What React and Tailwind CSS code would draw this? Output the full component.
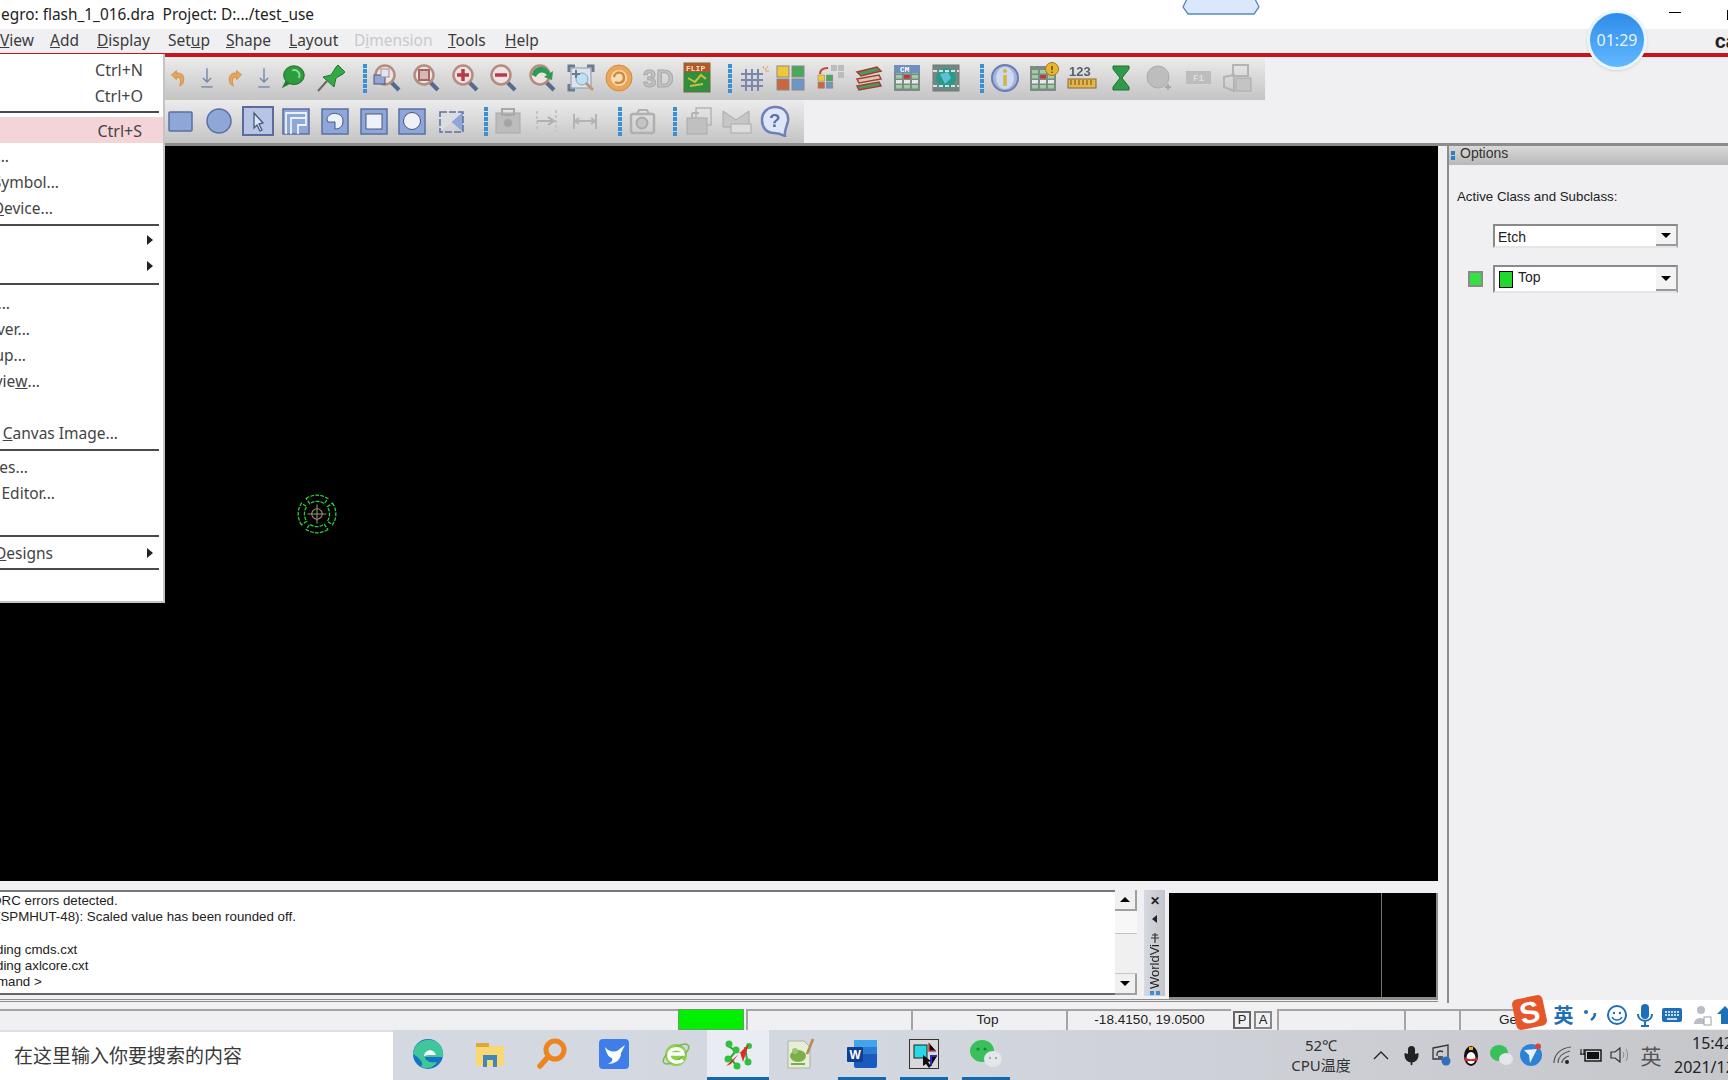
import { Mic } from "lucide-react";

const ui = "font-['Noto_Sans','Noto_Sans_CJK_SC',sans-serif]";
const arial = "font-['Liberation_Sans','Noto_Sans_CJK_SC',sans-serif]";

function Ico({ children, size = 32 }) {
  return (
    <svg width={size} height={size} viewBox="0 0 32 32" fill="none">
      {children}
    </svg>
  );
}

const Undo = ({ flip }) => (
  <Ico size={26}>
    <g transform={flip ? "translate(32 0) scale(-1 1)" : ""}>
      <path d="M8 12 L14 7 L14 10 C22 9 25 15 22 23 L18 26 C20 20 20 15 14 15 L14 18 Z" fill="#e9a45a" stroke="#c98a48" strokeWidth="1" />
    </g>
  </Ico>
);
const DownArrow = () => (
  <Ico size={26}>
    <path d="M16 4 V20 M11 16 L16 21 L21 16" stroke="#7a8aae" strokeWidth="1.8" />
    <path d="M9 27 H23" stroke="#7a8aae" strokeWidth="1.8" />
  </Ico>
);
const Bubble = () => (
  <Ico>
    <ellipse cx="17" cy="13" rx="11" ry="10" fill="#2c9c3c" stroke="#1c6a2a" />
    <path d="M8 19 L4 27 L13 22 Z" fill="#1f7c30" />
    <path d="M15 8 C20 6 25 11 22 16" stroke="#8fdc8f" strokeWidth="2" />
  </Ico>
);
const Pin = () => (
  <Ico>
    <path d="M3 29 L12 19" stroke="#6a6a5a" strokeWidth="2" />
    <path d="M8 15 L16 13 L21 5 L23 3 L30 10 L28 12 L21 16 L19 25 Z" fill="#35a948" stroke="#1e7a30" />
  </Ico>
);
const Mag = ({ children }) => (
  <Ico>
    <path d="M20 20 L28 28" stroke="#566a8e" strokeWidth="4" />
    <circle cx="14" cy="13" r="9.5" fill="#ece4e2" stroke="#b58c80" strokeWidth="2.5" />
    {children}
  </Ico>
);
const Grid = () => (
  <Ico>
    <path d="M4 12 H26 M4 18 H26 M4 24 H26 M9 7 V29 M15 7 V29 M21 7 V29" stroke="#7a88ab" strokeWidth="2" />
    <path d="M26 4 L27 7 M31 4 L28 8 M32 9 L28 9" stroke="#e0a060" strokeWidth="1" />
  </Ico>
);
const Squares = ({ ghost }) => (
  <Ico>
    {ghost && <rect x="17" y="3" width="6" height="6" fill="#bcbcbc" />}
    {ghost && <rect x="24" y="3" width="6" height="6" fill="#bcbcbc" />}
    {ghost && <rect x="24" y="10" width="6" height="6" fill="#bcbcbc" />}
    {ghost && <path d="M6 12 C6 7 10 6 14 6" stroke="#c0453a" strokeWidth="2" />}
    <g transform={ghost ? "translate(4 13) scale(.55)" : "translate(2 4)"}>
      <rect x="0" y="0" width="12" height="11" fill="#f0c93a" stroke="#888" />
      <rect x="15" y="0" width="12" height="11" fill="#48a85c" stroke="#888" />
      <rect x="0" y="13" width="12" height="11" fill="#c9683f" stroke="#888" />
      <rect x="15" y="13" width="12" height="11" fill="#6f94c6" stroke="#888" />
    </g>
  </Ico>
);
const Layers = () => (
  <Ico>
    <path d="M4 10 L24 5 L28 9 L8 14 Z" fill="#4b9a58" stroke="#a33c38" strokeWidth="1.5" />
    <path d="M4 17 L26 13 L28 17 L6 21 Z" fill="#d8cbb0" stroke="#a33c38" strokeWidth="1.5" />
    <path d="M4 24 L26 20 L28 24 L6 28 Z" fill="#4b9a58" stroke="#a33c38" strokeWidth="1.5" />
  </Ico>
);
const Cells = ({ children }) => (
  <Ico>
    <rect x="3" y="4" width="26" height="25" fill="#7f8a86" />
    {[8, 13, 18, 23].map((y) =>
      [5, 13, 21].map((x) => (
        <rect key={x + "-" + y} x={x} y={y} width="6" height="3.5" fill={y === 13 && x === 13 ? "#c03a34" : y === 18 ? "#e8e8e8" : "#9cd0a0"} />
      ))
    )}
    {children}
  </Ico>
);
const Swatch = () => (
  <Ico>
    <rect x="3" y="3" width="26" height="26" fill="#6f8a84" stroke="#777" />
    <circle cx="16" cy="16" r="10" fill="#2a9a86" />
    <path d="M10 12 L18 10 L21 16 L15 22 Z" fill="#5ec0d8" />
    <path d="M3 9 H29 M3 24 H29" stroke="#ddd" strokeWidth="2" strokeDasharray="4 2" />
  </Ico>
);
const Blue = ({ children, raised }) => (
  <Ico>
    {raised && <rect x="1" y="2" width="30" height="28" fill="#b7c4e4" stroke="#5a6c9c" strokeWidth="2" />}
    {children}
  </Ico>
);
const boxFill = "#8fa6d9";
const boxLine = "#5a709f";

function Slot({ children, className = "w-[38.7px]" }) {
  return <div className={"h-full shrink-0 flex items-center justify-center blur-[0.4px] " + className}>{children}</div>;
}

function Grip() {
  return (
    <div className="w-[6px] shrink-0 flex flex-col items-center justify-center gap-[1px]">
      {[0, 1, 2, 3, 4, 5].map((i) => (
        <div key={i} className="w-[4px] h-[4px] bg-[#3a8fd6]" />
      ))}
    </div>
  );
}

function Group({ grip, className, items, widths }) {
  return (
    <div className={"flex h-full bg-gradient-to-b from-[#ececec] to-[#c4c4c4] " + className}>
      {grip && <Grip />}
      {items.map((it, i) => (
        <Slot key={i} className={(widths ? widths[i] : "w-[38.7px]") + " pb-[2px]"}>{it}</Slot>
      ))}
    </div>
  );
}

const row1a = [<Undo />, <DownArrow />, <Undo flip />, <DownArrow />, <Bubble />, <Pin />];
const row1aWidths = ["w-[28.5px]", "w-[28.5px]", "w-[28.5px]", "w-[28.5px]", "w-[30px]", "w-[46px]"];
const row1b = [
  <Mag><rect x="3" y="13" width="11" height="9" fill="#8fa6d9" stroke="#556" /><rect x="10" y="7" width="8" height="8" fill="#dfe6f5" stroke="#a88" /></Mag>,
  <Mag><rect x="9" y="8" width="10" height="10" fill="#d8b8b4" stroke="#a06a62" strokeWidth="2" /></Mag>,
  <Mag><path d="M14 7 V19 M8 13 H20" stroke="#b83a4a" strokeWidth="3.5" /></Mag>,
  <Mag><path d="M8 13 H20" stroke="#b83a4a" strokeWidth="3.5" /></Mag>,
  <Mag><path d="M6 13 C7 3 20 2 24 11 L27 9 L26 18 L18 15 L21 13 C17 9 12 10 10 15 Z" fill="#2f9a54" /></Mag>,
  <Ico>
    <path d="M4 10 V4 H10 M22 4 H28 V10 M4 22 V28 H10" stroke="#6a7c90" strokeWidth="3" />
    <rect x="6" y="6" width="20" height="20" fill="#dce3ec" stroke="#8a98aa" />
    <circle cx="17" cy="17" r="6" fill="#bfe0f4" stroke="#8aa" />
    <path d="M21 21 L28 28" stroke="#c09878" strokeWidth="3" />
    <path d="M11 8 V16 M7 12 H15" stroke="#6a7c90" strokeWidth="2" />
  </Ico>,
  <Ico>
    <circle cx="16" cy="16" r="13" fill="#eaa558" stroke="#d08a3e" />
    <circle cx="16" cy="16" r="8" fill="#f6dcb4" />
    <path d="M11 15 C12 9 21 9 21 16 C21 21 15 22 12 20" stroke="#d08a3e" strokeWidth="2.5" />
  </Ico>,
  <Ico>
    <text x="1" y="25" fontFamily="Liberation Sans" fontWeight="700" fontSize="24" fill="#c2c2c2" stroke="#a8a8a8">3D</text>
  </Ico>,
  <Ico>
    <rect x="3" y="1" width="26" height="29" fill="#2f8f3c" stroke="#6b6b3a" />
    <rect x="3" y="1" width="26" height="9" fill="#b35a2c" />
    <text x="5" y="9" fontFamily="Liberation Mono" fontWeight="700" fontSize="8" fill="#f3e2b8">FLIP</text>
    <path d="M7 16 L14 20 L20 13 L25 17 M9 24 L22 22" stroke="#c9c23a" strokeWidth="2" />
  </Ico>,
];
const row1c = [
  <Grid />,
  <Squares />,
  <Squares ghost />,
  <Layers />,
  <Cells>
    <rect x="3" y="3" width="26" height="8" fill="#6f8fc0" />
    <text x="9" y="10" fontFamily="Liberation Mono" fontWeight="700" fontSize="8" fill="#fff">CM</text>
  </Cells>,
  <Swatch />,
];
const row1d = [
  <Ico>
    <circle cx="16" cy="16" r="13" fill="#a4b4de" stroke="#6d7fb0" strokeWidth="2" />
    <ellipse cx="16" cy="16" rx="9" ry="11" fill="#cfd9f0" />
    <path d="M16 13 V24" stroke="#d2b53a" strokeWidth="3.5" />
    <circle cx="16" cy="9" r="2" fill="#d2b53a" />
  </Ico>,
  <Cells>
    <circle cx="25" cy="7" r="6.5" fill="#e9b52e" stroke="#9a7a20" />
    <path d="M25 4 V8 M25 9.5 V11" stroke="#6a4a10" strokeWidth="1.5" />
  </Cells>,
  <Ico>
    <text x="3" y="14" fontFamily="Liberation Sans" fontWeight="700" fontSize="13" fill="#58616e">123</text>
    <rect x="2" y="17" width="28" height="9" fill="#e6b64a" stroke="#8a6a30" />
    <path d="M5 18 V23 M9 18 V23 M13 18 V23 M17 18 V23 M21 18 V23 M25 18 V23" stroke="#6a5020" />
  </Ico>,
  <Ico>
    <path d="M8 4 H24 V7 L17 16 L24 25 V28 H8 V25 L15 16 L8 7 Z" fill="#2f9a4a" stroke="#1f7034" />
  </Ico>,
  <Ico>
    <circle cx="15" cy="15" r="11" fill="#bdbdbd" stroke="#aaa" />
    <path d="M25 22 V28 M22 25 H28" stroke="#a8a8a8" strokeWidth="2" />
  </Ico>,
  <Ico>
    <rect x="4" y="9" width="25" height="13" fill="#bdbdbd" />
    <text x="11" y="19" fontFamily="Liberation Mono" fontWeight="700" fontSize="9" fill="#dedede">F1</text>
  </Ico>,
  <Ico>
    <rect x="12" y="3" width="15" height="11" stroke="#b4b4b4" strokeWidth="2" />
    <rect x="15" y="16" width="15" height="13" fill="#c4c4c4" stroke="#aaa" />
    <path d="M3 15 L13 13 V29 L3 25 Z" stroke="#b4b4b4" strokeWidth="2" />
  </Ico>,
];
const row2a = [
  <Blue><rect x="5" y="7" width="23" height="19" rx="1" fill={boxFill} stroke={boxLine} strokeWidth="1.5" /></Blue>,
  <Blue><circle cx="16" cy="16" r="12" fill={boxFill} stroke={boxLine} strokeWidth="1.5" /></Blue>,
  <Blue raised><path d="M12 8 L12 23 L15 20 L18 26 L20 25 L17 19 L21 18 Z" fill="#dfe6f5" stroke="#46587e" strokeWidth="1.3" /></Blue>,
  <Blue><rect x="3" y="4" width="26" height="25" fill={boxFill} stroke={boxLine} strokeWidth="1.5" /><path d="M6 29 V8 H26 V20 H18 V29 M11 29 V13 H26" stroke="#eef1f8" strokeWidth="1.8" /></Blue>,
  <Blue><rect x="3" y="4" width="26" height="25" fill={boxFill} stroke={boxLine} strokeWidth="1.5" /><path d="M8 15 C8 6 24 6 24 16 C24 22 20 24 16 24 V17 H9 Z" fill="#eef1f8" stroke="#46587e" /></Blue>,
  <Blue><rect x="3" y="4" width="26" height="25" fill={boxFill} stroke={boxLine} strokeWidth="1.5" /><rect x="8" y="9" width="16" height="15" fill="#eef1f8" stroke="#46587e" /></Blue>,
  <Blue><rect x="3" y="4" width="26" height="25" fill={boxFill} stroke={boxLine} strokeWidth="1.5" /><circle cx="16" cy="16" r="8.5" fill="#eef1f8" stroke="#46587e" /></Blue>,
  <Blue><path d="M5 7 H28 V27 Z" fill={boxFill} /><path d="M5 27 L28 7 L5 7 Z" fill="#dcdde2" /><path d="M5 7 H28 V27 H5 Z" stroke={boxLine} strokeWidth="1.5" strokeDasharray="7 2" /></Blue>,
];
const Case = () => (
  <Ico>
    <rect x="4" y="8" width="24" height="20" fill="#bcbcbc" stroke="#a8a8a8" />
    <rect x="10" y="4" width="12" height="6" stroke="#a8a8a8" strokeWidth="2" />
    <circle cx="16" cy="18" r="4" fill="#a4a4a4" />
  </Ico>
);
const row2b = [
  <Case />,
  <Ico>
    <path d="M6 6 V26 M25 5 V27" stroke="#c4c4c4" strokeWidth="2" strokeDasharray="3 2" />
    <path d="M6 16 H22 M17 12 L23 16 L17 20" stroke="#b0b0b0" strokeWidth="2" />
  </Ico>,
  <Ico>
    <path d="M5 9 V24 M27 9 V24 M6 16 H26 M10 13 L6 16 L10 19 M22 13 L26 16 L22 19" stroke="#b4b4b4" strokeWidth="2" />
  </Ico>,
];
const row2c = [
  <Ico>
    <rect x="5" y="9" width="23" height="19" rx="2" stroke="#b0b0b0" strokeWidth="2.5" />
    <path d="M11 9 L13 5 H21 L23 9" stroke="#b0b0b0" strokeWidth="2" />
    <circle cx="16" cy="18" r="5.5" fill="#c4c4c4" stroke="#aaa" strokeWidth="2" />
  </Ico>,
];
const row2d = [
  <Ico>
    <rect x="14" y="3" width="15" height="17" stroke="#b4b4b4" strokeWidth="1.5" />
    <rect x="5" y="13" width="20" height="16" fill="#c0c0c0" stroke="#aaa" />
    <path d="M10 8 H17 M10 8 V13" stroke="#b4b4b4" strokeWidth="2" />
  </Ico>,
  <Ico>
    <path d="M3 6 L16 15 L29 6 V22 H3 Z" fill="#c6c6c6" stroke="#aaa" />
    <rect x="11" y="19" width="20" height="9" fill="#dcdcdc" stroke="#aaa" />
  </Ico>,
  <Ico>
    <path d="M16 2 C25 2 30 8 29 16 C28 22 25 25 26 31 C22 29 19 28 15 28 C7 28 3 22 3 15 C3 7 9 2 16 2 Z" fill="#dfe6f5" stroke="#6e82b8" strokeWidth="2.5" />
    <text x="10" y="22" fontFamily="Liberation Sans" fontWeight="700" fontSize="19" fill="#5c71a8">?</text>
  </Ico>,
];

function MenuBar() {
  const items = [
    [<><u>V</u>iew</>, "w-[50px]"],
    [<><u>A</u>dd</>, "w-[47px]"],
    [<><u>D</u>isplay</>, "w-[71px]"],
    [<>Set<u>u</u>p</>, "w-[58px]"],
    [<><u>S</u>hape</>, "w-[63px]"],
    [<><u>L</u>ayout</>, "w-[65px]"],
    [<>D<u>i</u>mension</>, "w-[94px] text-[#c9c9cb]"],
    [<><u>T</u>ools</>, "w-[57px]"],
    [<><u>H</u>elp</>, "w-[50px]"],
  ];
  return (
    <div className={"h-[24px] flex items-center text-[15.5px] text-[#3c3c3c] whitespace-nowrap " + ui}>
      {items.map(([label, cls], i) => (
        <span key={i} className={cls}>{label}</span>
      ))}
      <span className={"ml-auto mr-[-9px] text-[20px] font-bold text-[#222] " + arial}>ca</span>
    </div>
  );
}

function MenuRow({ end = "w-[8px]", label, right, arrow, hi }) {
  return (
    <div className={"h-[26px] pt-[2px] flex items-center shrink-0 relative whitespace-nowrap " + (hi ? "bg-[#f4d4d6] mr-[-3px]" : "")}>
      {label && <div className={"flex justify-end " + end}>{label}</div>}
      {right && <span className={"absolute text-[16px] " + (hi ? "right-[24px]" : "right-[20px]")}>{right}</span>}
      {arrow && <span className="absolute left-[147px] mb-[2px] w-0 h-0 border-y-[5px] border-y-transparent border-l-[6px] border-l-[#222]" />}
    </div>
  );
}

function FileMenu() {
  const Sep = ({ className }) => <div className={"h-[2px] w-[159px] bg-[#4a4a4a] shrink-0 " + className} />;
  return (
    <div className={"absolute left-0 top-[54px] w-[165px] h-[549px] bg-white border-r-2 border-b-2 border-[#c4c4c4] flex flex-col pt-[2px] overflow-hidden text-[15.5px] text-[#444] z-10 " + ui}>
      <MenuRow right="Ctrl+N" />
      <MenuRow right="Ctrl+O" />
      <Sep className="mt-[3px] mb-[4px]" />
      <MenuRow hi right="Ctrl+S" />
      <MenuRow label="..." end="w-[9px]" />
      <MenuRow label="Symbol..." end="w-[59px]" />
      <MenuRow label={<><u>D</u>evice...</>} end="w-[53px]" />
      <Sep className="mt-[3px] mb-[1px]" />
      <MenuRow arrow />
      <MenuRow arrow />
      <Sep className="mt-[4px] mb-[5px]" />
      <MenuRow label="..." end="w-[10px]" />
      <MenuRow label="ver..." end="w-[30px]" />
      <MenuRow label="up..." end="w-[26px]" />
      <MenuRow label={<>vie<u>w</u>...</>} end="w-[40px]" />
      <MenuRow />
      <MenuRow label={<><u>C</u>anvas Image...</>} end="w-[118px]" />
      <Sep className="mt-[3px] mb-[3px]" />
      <MenuRow label="es..." end="w-[28px]" />
      <MenuRow label="Editor..." end="w-[55px]" />
      <MenuRow />
      <Sep className="mt-[3px] mb-[3px]" />
      <MenuRow arrow label={<><u>D</u>esigns</>} end="w-[53px]" />
      <Sep className="mt-[2px]" />
    </div>
  );
}

function Toolbars() {
  return (
    <div className="h-[89px] shrink-0 flex flex-col border-b-[3px] border-b-[#8c8c8c]">
      <div className="h-[43px] flex pl-[164px]">
        <Group className="pr-[8px]" items={row1a} widths={row1aWidths} />
        <Group grip className="pr-[11px]" items={row1b} />
        <Group grip className="pr-[14px]" items={row1c} />
        <Group grip className="pr-[9px]" items={row1d} />
      </div>
      <div className="h-[43px] flex pl-[161px]">
        <Group className="pr-[12px]" items={row2a} />
        <Group grip className="pr-[12px]" items={row2b} />
        <Group grip className="pr-[11px]" items={row2c} />
        <Group grip className="pr-[10px]" items={row2d} />
      </div>
    </div>
  );
}

function ScrollBtn({ up }) {
  return (
    <div className="h-[21px] bg-[#f0f0f0] border-r-2 border-b-2 border-[#a0a0a0] flex items-center justify-center shrink-0">
      <span className={"w-0 h-0 border-x-[5px] border-x-transparent " + (up ? "border-b-[5px] border-b-black" : "border-t-[5px] border-t-black")} />
    </div>
  );
}

function Dock() {
  return (
    <div className="h-[108px] flex mt-[9px]">
      <div className={"w-[1117px] h-[105px] bg-white border-y-2 border-t-[#777] border-b-[#666] text-[13.3px] leading-[16.3px] text-[#222] pt-[1px] overflow-hidden " + arial}>
        <div className="ml-[-8px]">DRC errors detected.</div>
        <div className="ml-[-4px]">(SPMHUT-48): Scaled value has been rounded off.</div>
        <div className="h-[16.3px]" />
        <div className="ml-[-4px]">ding cmds.cxt</div>
        <div className="ml-[-4px]">ding axlcore.cxt</div>
        <div className="ml-[-3px]">mand &gt;</div>
      </div>
      <div className="w-[22px] h-[105px] flex flex-col">
        <ScrollBtn up />
        <div className="h-[22px] bg-[#f7f7f7]" />
        <div className="flex-1 bg-[#f0f0f0] border-y border-[#c4c4c4]" />
        <ScrollBtn />
      </div>
      <div className="w-[21px] ml-[7px] h-[106px] bg-gradient-to-r from-[#d6d9e0] to-[#c2c4ca] flex flex-col items-center pt-[4px] overflow-hidden">
        <span className={"text-[12px] leading-[14px] font-bold text-[#222] " + arial}>✕</span>
        <span className="mt-[7px] w-0 h-0 border-y-[4px] border-y-transparent border-r-[5px] border-r-[#222]" />
        <svg className="mt-[9px]" width="12" height="12" viewBox="0 0 12 12"><path d="M2 6 H10 M6 1 V11 M3 3 H9" stroke="#333" strokeWidth="1.2" /></svg>
        <span className={"[writing-mode:vertical-rl] rotate-180 text-[13px] leading-[15px] text-[#222] " + arial}>WorldVi</span>
        <div className="mt-[2px] flex gap-[2px]">
          <span className="w-[4px] h-[4px] bg-[#3a8fd6]" />
          <span className="w-[4px] h-[4px] bg-[#3a8fd6]" />
        </div>
      </div>
      <div className="w-[269px] ml-[4px] mt-[3px] h-[106px] bg-black border-r-2 border-b-2 border-[#8c8c8c] flex">
        <div className="w-[213px] border-r border-[#6a7a60]" />
      </div>
    </div>
  );
}

function Crosshair() {
  const bow = "M9.7 5.3 A18 18 0 0 1 30.3 5.3 L26.9 10.2 A12 12 0 0 0 13.1 10.2 Z";
  return (
    <div className="absolute left-[296px] top-[347px]">
      <svg width="42" height="42" viewBox="0 0 40 40" fill="none">
        <g stroke="#2cd03e" strokeWidth="1.2" strokeDasharray="3.5 1.2">
          {[0, 90, 180, 270].map((a) => (
            <path key={a} d={bow} transform={"rotate(" + a + " 20 20)"} />
          ))}
        </g>
        <circle cx="20" cy="20" r="5" stroke="#9a9a70" />
        <path d="M20 11 V29 M11 20 H29" stroke="#9a9a70" />
      </svg>
    </div>
  );
}

function SelectBox({ className, children }) {
  return (
    <div className={"w-[185px] bg-white border-2 border-[#8a8a8a] border-r-[#a0a0a0] border-b-[#e6e6e6] flex items-center text-[14px] text-[#222] " + className}>
      <div className="flex-1 flex items-center">{children}</div>
      <div className="w-[20px] h-full bg-[#f3f3f3] border-b-2 border-[#999] flex items-center justify-center">
        <span className="w-0 h-0 border-x-[5px] border-x-transparent border-t-[5px] border-t-black" />
      </div>
    </div>
  );
}

function OptionsPanel() {
  return (
    <div className={"w-[281px] ml-[9px] h-[857px] border-l-2 border-[#8c8c8c] " + arial}>
      <div className="h-[19px] bg-gradient-to-b from-[#d9d9d9] to-[#b8b8b8] flex items-center pl-[2px] pb-[5px]">
        <div className="flex flex-col gap-[1px] mr-[5px] mt-[4px]">
          <span className="w-[4px] h-[4px] bg-[#2f7fc8]" />
          <span className="w-[4px] h-[4px] bg-[#2f7fc8]" />
        </div>
        <span className="text-[14px] text-[#333]">Options</span>
      </div>
      <div className="pl-[8px] pt-[23px] text-[13.3px] leading-[18px] text-[#222]">Active Class and Subclass:</div>
      <div className="pl-[44px] mt-[18px]">
        <SelectBox className="h-[24px]"><span className="pl-[3px] pt-[3px]">Etch</span></SelectBox>
      </div>
      <div className="flex items-center mt-[17px] pl-[19px]">
        <div className="w-[15px] h-[16px] bg-[#33e23f] border-2 border-[#8a8a8a] mr-[10px]" />
        <SelectBox className="h-[28px]">
          <span className="w-[14px] h-[17px] ml-[4px] bg-[#1fd92f] border border-black" />
          <span className="pl-[5px] -mt-[4px]">Top</span>
        </SelectBox>
      </div>
    </div>
  );
}

function StatusBar() {
  const cell = "h-full border-l-2 border-t-2 border-[#a4a4a4] flex items-center justify-center shrink-0";
  return (
    <div className={"h-[21px] shrink-0 flex text-[13.6px] text-[#222] bg-[#f0eff1] " + arial}>
      <div className="w-[678px] shrink-0 border-t-2 border-[#a4a4a4]" />
      <div className="w-[66px] shrink-0 bg-[#00f000] border border-[#6a9a6a]" />
      <div className="w-[2px] shrink-0" />
      <div className={cell + " w-[165px]"} />
      <div className={cell + " w-[155px] pr-[4px]"}>Top</div>
      <div className={cell + " w-[165px]"}>-18.4150, 19.0500</div>
      <div className="w-[18px] ml-[2px] mt-[2px] h-[18px] border-2 border-[#666] flex items-center justify-center shrink-0 text-[13px]">P</div>
      <div className="w-[18px] ml-[3px] mt-[2px] h-[18px] border-2 border-[#888] flex items-center justify-center shrink-0 text-[13px]">A</div>
      <div className={cell + " w-[127px] ml-[5px]"} />
      <div className={cell + " w-[55px]"} />
      <div className={cell + " flex-1 justify-start pl-[38px]"}>Ge</div>
    </div>
  );
}

function ImeBar() {
  return (
    <div className="absolute left-[1512px] top-[995px] w-[216px] h-[35px] z-10 flex">
      <div className="absolute left-[20px] right-0 top-[5px] h-[29px] bg-white" />
      <div className="relative shrink-0 w-[35px] h-[35px] flex items-center justify-center">
        <div className="w-[31px] h-[31px] bg-[#e5562a] rounded-[5px] -rotate-12 flex items-center justify-center">
          <span className={"text-[30px] leading-none font-black text-white " + arial}>S</span>
        </div>
      </div>
      <div className="relative shrink-0 flex items-center pt-[5px] text-[#1f6fb8]">
        <span className={"w-[27px] ml-[3px] text-center text-[20px] font-bold font-['Noto_Sans_CJK_SC',sans-serif]"}>英</span>
        <svg className="ml-[3px]" width="22" height="22" viewBox="0 0 22 22" fill="none"><circle cx="6" cy="8" r="2" fill="#1f6fb8" /><path d="M15 9 C15 12 14 14 11 16" stroke="#1f6fb8" strokeWidth="2.5" /></svg>
        <svg className="ml-[4px]" width="22" height="22" viewBox="0 0 22 22" fill="none"><circle cx="11" cy="11" r="9" stroke="#1f6fb8" strokeWidth="2" /><circle cx="8" cy="9" r="1.2" fill="#1f6fb8" /><circle cx="14" cy="9" r="1.2" fill="#1f6fb8" /><path d="M6 13 C8 17 14 17 16 13" stroke="#1f6fb8" strokeWidth="1.5" /></svg>
        <svg className="ml-[7px]" width="20" height="24" viewBox="0 0 20 24" fill="none"><rect x="6" y="1" width="8" height="15" rx="4" fill="#1f6fb8" /><path d="M3 11 C3 20 17 20 17 11 M10 18 V23 M6 23 H14" stroke="#1f6fb8" strokeWidth="2" /></svg>
        <svg className="ml-[6px]" width="22" height="18" viewBox="0 0 22 18" fill="none"><rect x="1" y="2" width="20" height="14" rx="2" fill="#1f6fb8" /><path d="M4 6 H18 M4 9 H18" stroke="#fff" strokeWidth="1.5" strokeDasharray="2 1" /><path d="M6 13 H16" stroke="#fff" strokeWidth="1.5" /></svg>
        <svg className="ml-[8px]" width="22" height="22" viewBox="0 0 22 22" fill="none"><circle cx="10" cy="6" r="4" fill="#b9bec6" /><path d="M3 20 C3 12 15 12 15 20 Z" fill="#b9bec6" /><rect x="13" y="13" width="7" height="8" fill="#fff" stroke="#9aa0a8" /></svg>
        <svg className="ml-[3px]" width="18" height="22" viewBox="0 0 18 22" fill="none"><path d="M9 2 L17 10 H13 V20 H5 V10 H1 Z" fill="#1f6fb8" /></svg>
      </div>
    </div>
  );
}

function TaskIcon({ children, active, bar }) {
  return (
    <div className={"w-[62px] shrink-0 h-full flex flex-col " + (active ? "bg-[#e9edf3]" : "")}>
      <div className="flex-1 flex items-center justify-center">{children}</div>
      <div className={"h-[3px] shrink-0 " + (bar === "full" ? "bg-[#1269b0]" : bar ? "mx-[7px] bg-[#1269b0]" : "")} />
    </div>
  );
}

function Taskbar() {
  return (
    <div className="h-[50px] shrink-0 flex bg-gradient-to-r from-[#d5d9e3] via-[#d3d7df] to-[#c6c7cb] overflow-visible">
      <div className={"w-[393px] shrink-0 bg-white border-t-2 border-[#dde0e6] flex items-center pl-[14px] pb-[2px] text-[19px] text-[#3a3a3a] font-['Noto_Sans_CJK_SC',sans-serif]"}>在这里输入你要搜索的内容</div>
      <div className="flex pl-[4px]">
        <TaskIcon>
          <svg width="32" height="32" viewBox="0 0 32 32"><circle cx="16" cy="16" r="15" fill="#1672c4" /><path d="M1 16 C2 4 14 -1 23 3 C30 7 32 14 31 19 H13 C13 23 18 25 25 24 C22 30 14 32 8 28 C13 28 9 20 1 16 Z" fill="#3fc79a" /><path d="M12 18 C13 11 22 10 24 17 H16 Z" fill="#fff" /></svg>
        </TaskIcon>
        <TaskIcon>
          <svg width="30" height="28" viewBox="0 0 30 28"><path d="M1 3 H12 L15 6 H29 V26 H1 Z" fill="#f8d775" /><rect x="1" y="3" width="13" height="4" fill="#d9a93c" /><path d="M8 27 V15 H22 V27 H18 V20 H12 V27 Z" fill="#3f87b8" /></svg>
        </TaskIcon>
        <TaskIcon>
          <svg width="30" height="32" viewBox="0 0 30 32" fill="none"><circle cx="18" cy="12" r="9" stroke="#ee8420" strokeWidth="5" /><path d="M11 19 L3 28" stroke="#ee8420" strokeWidth="5.5" strokeLinecap="round" /></svg>
        </TaskIcon>
        <TaskIcon>
          <svg width="30" height="30" viewBox="0 0 30 30"><rect width="30" height="30" rx="4" fill="#3f7ee8" /><path d="M6 8 C10 13 14 13 18 12 L26 6 L22 14 C22 21 16 25 9 25 C13 23 14 21 13 19 C9 18 7 13 6 8 Z" fill="#fff" /></svg>
        </TaskIcon>
        <TaskIcon>
          <svg width="30" height="30" viewBox="0 0 30 30" fill="none"><circle cx="15" cy="16" r="11" fill="#8fd14a" /><ellipse cx="15" cy="15" rx="15" ry="6" stroke="#7aba54" strokeWidth="1.5" transform="rotate(-35 15 15)" /><path d="M8 15 H22 C22 8 9 8 8 15 C7 23 17 25 22 21" stroke="#fff" strokeWidth="3.5" /></svg>
        </TaskIcon>
        <TaskIcon active bar="full">
          <svg width="30" height="32" viewBox="0 0 30 32" fill="none"><path d="M5 8 L13 13 L7 20 L14 28 M22 9 L24 22" stroke="#29a83a" strokeWidth="2" /><g fill="#2fc23f"><circle cx="6" cy="6" r="3.5" /><circle cx="13" cy="12" r="3.5" /><circle cx="5" cy="21" r="3.5" /><circle cx="14" cy="28" r="3.5" /><circle cx="25" cy="24" r="3.5" /><circle cx="26" cy="8" r="3" /></g><path d="M3 28 L26 6 L20 24 L17 14 L8 26 Z" fill="#e02a24" /></svg>
        </TaskIcon>
        <TaskIcon>
          <svg width="30" height="32" viewBox="0 0 30 32"><path d="M3 3 H19 L25 9 V30 H3 Z" fill="#e6edd8" stroke="#aab5a0" /><ellipse cx="13" cy="18" rx="8" ry="6" fill="#7dae4a" /><circle cx="10" cy="13" r="3" fill="#9cc870" /><path d="M6 26 H20" stroke="#7dae4a" strokeWidth="2" /><path d="M22 16 L28 1" stroke="#b8894a" strokeWidth="2.5" /></svg>
        </TaskIcon>
        <TaskIcon bar="part">
          <svg width="30" height="30" viewBox="0 0 30 30"><rect x="7" y="1" width="23" height="28" rx="2" fill="#185abd" /><rect x="7" y="1" width="23" height="7" fill="#41a5ee" /><rect x="7" y="8" width="23" height="7" fill="#2b7cd3" /><rect x="0" y="8" width="16" height="15" rx="1" fill="#103f91" /><text x="2.5" y="20" fontFamily="Liberation Sans" fontWeight="700" fontSize="12" fill="#fff">W</text></svg>
        </TaskIcon>
        <TaskIcon bar="part">
          <svg width="30" height="30" viewBox="0 0 30 30"><rect width="30" height="30" fill="#d8d8da" stroke="#333" strokeWidth="2" /><rect x="5" y="6" width="13" height="13" fill="#28d8e4" stroke="#222" /><path d="M20 4 V12 H27" stroke="#c04048" strokeWidth="1.5" /><path d="M22 27 V17 H28" stroke="#2a2ab8" strokeWidth="2" /><path d="M14 16 L14 27 L17 25 L20 29 L22 27 L19 23 L22 22 Z" fill="#111" /></svg>
        </TaskIcon>
        <TaskIcon bar="part">
          <svg width="32" height="28" viewBox="0 0 32 28"><ellipse cx="12" cy="11" rx="12" ry="11" fill="#39c05a" /><circle cx="8" cy="9" r="1.6" fill="#178a38" /><circle cx="15" cy="9" r="1.6" fill="#178a38" /><ellipse cx="23" cy="19" rx="9" ry="8" fill="#e4e6ea" /><circle cx="20" cy="18" r="1.2" fill="#aaa" /><circle cx="26" cy="18" r="1.2" fill="#aaa" /></svg>
        </TaskIcon>
      </div>
      <div className="flex-1" />
      <div className={"w-[80px] mr-[5px] shrink-0 flex flex-col items-center justify-center text-[15px] leading-[20px] text-[#333] " + ui}>
        <span>52℃</span>
        <span>CPU温度</span>
      </div>
      <div className="flex shrink-0">
        {[
          <svg width="18" height="12" viewBox="0 0 18 12" fill="none"><path d="M2 10 L9 3 L16 10" stroke="#222" strokeWidth="1.3" /></svg>,
          <Mic size={21} className="text-[#222] fill-[#222]" />,
          <svg width="22" height="22" viewBox="0 0 22 22" fill="none"><path d="M3 4 L18 1 V15 H3 Z" stroke="#333" strokeWidth="1.3" /><path d="M7 9 C9 6 12 7 13 8 M7 9 V12 M13 13 H8" stroke="#333" strokeWidth="1.3" /><circle cx="16" cy="17" r="4.5" fill="#2f6fc0" /></svg>,
          <svg width="18" height="24" viewBox="0 0 18 24"><ellipse cx="9" cy="13" rx="7" ry="10" fill="#111" /><ellipse cx="9" cy="15" rx="4.5" ry="6" fill="#fff" /><path d="M3 14 C6 17 12 17 15 14 L15 18 L3 18 Z" fill="#e0201c" /><rect x="7" y="4" width="4" height="3" fill="#f0b020" /></svg>,
          <svg width="24" height="20" viewBox="0 0 24 20"><ellipse cx="10" cy="8" rx="9" ry="8" fill="#39c05a" /><ellipse cx="17" cy="14" rx="7" ry="6" fill="#e4e6ea" /></svg>,
          <svg width="24" height="24" viewBox="0 0 24 24"><circle cx="12" cy="12" r="11" fill="#2b83d8" /><path d="M5 7 L18 6 L11 20 L10 12 Z" fill="#e8f2ff" /><circle cx="19" cy="3.5" r="3" fill="#d8443c" /></svg>,
          <svg className="ml-[4px]" width="22" height="20" viewBox="0 0 22 20" fill="none"><path d="M2 18 C2 10 8 3 19 2 M6 18 C6 12 10 8 18 6 M10 18 C10 15 13 12 17 11" stroke="#555" strokeWidth="1.2" /><circle cx="15" cy="17" r="2" fill="#222" /></svg>,
          <svg width="22" height="16" viewBox="0 0 22 16" fill="none"><rect x="5" y="3" width="16" height="11" stroke="#111" strokeWidth="1.4" /><rect x="7" y="5" width="12" height="7" fill="#111" /><path d="M1 2 V8 M4 2 V8 M0 7 H5" stroke="#111" /></svg>,
          <svg width="22" height="18" viewBox="0 0 22 18" fill="none"><path d="M1 6 H5 L10 2 V16 L5 12 H1 Z" stroke="#333" strokeWidth="1.2" /><path d="M13 6 C14 8 14 10 13 12 M16 3 C18 7 18 11 16 15" stroke="#888" /></svg>,
          <span className="text-[21px] leading-none text-[#555] font-['Noto_Sans_CJK_SC',sans-serif]">英</span>,
        ].map((ic, i) => (
          <div key={i} className="w-[30px] flex items-center justify-center">{ic}</div>
        ))}
      </div>
      <div className={"w-[54px] ml-[8px] shrink-0 flex flex-col justify-center text-[16px] leading-[24px] text-[#222] whitespace-nowrap " + ui}>
        <span className="pl-[18px]">15:42</span>
        <span>2021/12</span>
      </div>
    </div>
  );
}

export default function App() {
  return (
    <div className={"w-[1728px] h-[1080px] relative overflow-hidden flex flex-col bg-[#f0eff1] " + ui}>
      <div className="h-[29px] shrink-0 bg-white flex items-center text-[15.4px] text-[#222] whitespace-pre pl-[1px]">
        egro: flash_1_016.dra  Project: D:.../test_use
      </div>
      <MenuBar />
      <div className="h-[4px] shrink-0 bg-[#c8151b]" />
      <Toolbars />
      <div className="flex-1 flex min-h-0">
        <div className="w-[1438px] shrink-0 flex flex-col">
          <div className="h-[735px] shrink-0 bg-black relative">
            <Crosshair />
          </div>
          <Dock />
          <div className="h-[3px] mt-[1px] border-y border-[#8c8c8c]" />
        </div>
        <OptionsPanel />
      </div>
      <StatusBar />
      <Taskbar />

      <FileMenu />
      <ImeBar />

      {/* bits of the recording software sitting on top of the window */}
      <svg className="absolute left-[1182px] top-0" width="78" height="16" viewBox="0 0 78 16">
        <path d="M5 -1 H73 L77 7 L72 14 H6 L1 7 Z" fill="#dbe8fb" stroke="#5a86c0" strokeWidth="1.3" />
      </svg>
      <div className="absolute left-[1587px] top-[10px] w-[60px] h-[60px] rounded-full bg-gradient-to-b from-[#2c8cea] to-[#62b8ff] border-[3px] border-[#eaf4fc] shadow flex items-center justify-center text-[16px] text-[#e6f2ff] z-20">
        01:29
      </div>
      <div className="absolute left-[1669px] top-[12px] w-[12px] h-[1px] bg-black" />
      <div className="absolute left-[1727px] top-[10px] w-[1px] h-[10px] bg-black" />
    </div>
  );
}
